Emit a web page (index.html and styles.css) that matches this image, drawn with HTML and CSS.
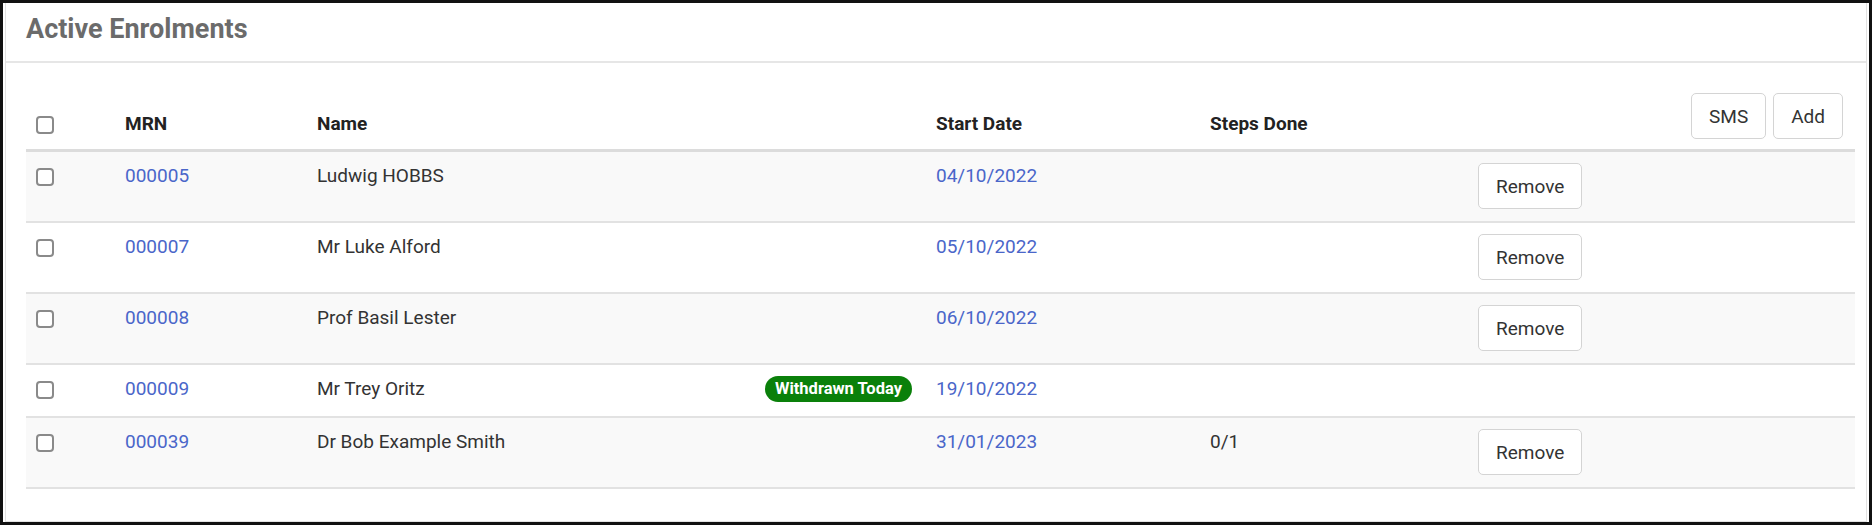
FILE: index.html
```html
<!doctype html>
<html lang="en">
  <head>
    <meta charset="UTF-8" />
    <title>Active Enrolments</title>
    <link rel="stylesheet" href="styles.css">
  </head>
  <body>
    <div class="frame">
      <div class="card">
        <div class="card-header">
          <h2>Active Enrolments</h2>
        </div>

        <div class="card-body">
          <table class="enrolments">
            <colgroup>
              <col class="col-check" />
              <col class="col-mrn" />
              <col class="col-name" />
              <col class="col-date" />
              <col class="col-steps" />
              <col />
            </colgroup>
            <thead>
              <tr>
                <th class="check"><input type="checkbox" /></th>
                <th>MRN</th>
                <th>Name</th>
                <th>Start Date</th>
                <th>Steps Done</th>
                <th class="actions"><button>SMS</button><button>Add</button></th>
              </tr>
            </thead>
            <tbody>
              <tr>
                <td class="check"><input type="checkbox" /></td>
                <td><a href="#">000005</a></td>
                <td>Ludwig HOBBS</td>
                <td><a href="#">04/10/2022</a></td>
                <td></td>
                <td><button class="remove">Remove</button></td>
              </tr>
              <tr>
                <td class="check"><input type="checkbox" /></td>
                <td><a href="#">000007</a></td>
                <td>Mr Luke Alford</td>
                <td><a href="#">05/10/2022</a></td>
                <td></td>
                <td><button class="remove">Remove</button></td>
              </tr>
              <tr>
                <td class="check"><input type="checkbox" /></td>
                <td><a href="#">000008</a></td>
                <td>Prof Basil Lester</td>
                <td><a href="#">06/10/2022</a></td>
                <td></td>
                <td><button class="remove">Remove</button></td>
              </tr>
              <tr>
                <td class="check"><input type="checkbox" /></td>
                <td><a href="#">000009</a></td>
                <td>Mr Trey Oritz <span class="badge">Withdrawn Today</span></td>
                <td><a href="#">19/10/2022</a></td>
                <td></td>
                <td></td>
              </tr>
              <tr>
                <td class="check"><input type="checkbox" /></td>
                <td><a href="#">000039</a></td>
                <td>Dr Bob Example Smith</td>
                <td><a href="#">31/01/2023</a></td>
                <td>0/1</td>
                <td><button class="remove">Remove</button></td>
              </tr>
            </tbody>
          </table>
        </div>
      </div>
    </div>
  </body>
</html>
```

FILE: styles.css
```css
body {
  margin: 0;
  font-family: Roboto, 'Liberation Sans', sans-serif;
  font-size: 19px;
  color: #333;
  background-color: #fff;
}

.frame {
  width: 1872px;
  height: 525px;
  box-sizing: border-box;
  border: 3px solid #111;
  padding: 0 2px;
}

.card {
  height: 100%;
  box-sizing: border-box;
  border: 1px solid #e2e2e2;
  border-top: none;
}

.card-header {
  padding: 8px 20px 14px;
  border-bottom: 2px solid #e6e6e6;
}

.card-header h2 {
  margin: 0;
  font-size: 27px;
  line-height: 36px;
  font-weight: 700;
  color: #6b6b6b;
}

.card-body {
  padding: 18px 11px 0 20px;
}

.enrolments {
  width: 100%;
  table-layout: fixed;
  border-collapse: collapse;
  line-height: 30px;
}

.col-check { width: 87px; }
.col-mrn { width: 192px; }
.col-name { width: 619px; }
.col-date { width: 274px; }
.col-steps { width: 268px; }

.enrolments th {
  text-align: left;
  vertical-align: bottom;
  font-weight: 700;
  color: #222;
  padding: 12px 12px 10px;
  border-bottom: 3px solid #dcdcdc;
}

.enrolments td {
  vertical-align: top;
  padding: 9px 12px 12px;
  border-bottom: 2px solid #e2e2e2;
}

.enrolments tbody tr:nth-child(odd) {
  background-color: #f9f9f9;
}

.enrolments .check {
  padding-left: 10px;
}

.enrolments .actions {
  text-align: right;
}

.enrolments a {
  color: #4a66c9;
  text-decoration: none;
}

input[type='checkbox'] {
  appearance: none;
  width: 18px;
  height: 18px;
  margin: 0;
  border: 2px solid #8a8a8a;
  border-radius: 4px;
  background-color: #fff;
  vertical-align: middle;
}

button {
  font-family: inherit;
  font-size: 19px;
  color: #333;
  background-color: #fff;
  border: 1px solid #d4d4d4;
  border-radius: 5px;
  height: 46px;
  padding: 0 17px;
  cursor: pointer;
  vertical-align: bottom;
}

.actions button {
  margin-left: 7px;
}

.remove {
  margin-top: 2px;
  vertical-align: top;
}

.badge {
  float: right;
  margin-top: 2px;
  height: 26px;
  line-height: 26px;
  padding: 0 10px;
  border-radius: 13px;
  background-color: #0a800a;
  color: #fff;
  font-size: 16.5px;
  font-weight: 700;
}
```
